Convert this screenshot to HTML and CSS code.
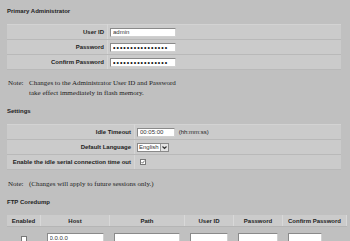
FILE: index.html
```html
<!DOCTYPE html>
<html lang="en">
<head>
    <meta charset="UTF-8">
    <meta name="viewport" content="width=device-width, initial-scale=1.0">
    <title>Administration</title>
    <link rel="stylesheet" href="styles.css">
</head>
<body>
    <div class="page">
        <h2 class="section-title">Primary Administrator</h2>
        <table class="form-table admin-table">
            <tr>
                <th>User ID</th>
                <td><input class="field" type="text" value="admin"></td>
            </tr>
            <tr>
                <th>Password</th>
                <td><input class="field secret" type="password" value="xxxxxxxxxxxxxxxx"></td>
            </tr>
            <tr>
                <th>Confirm Password</th>
                <td><input class="field secret" type="password" value="xxxxxxxxxxxxxxxx"></td>
            </tr>
        </table>

        <div class="note note-first">
            <span class="note-label">Note:</span>
            <span class="note-text">Changes to the Administrator User ID and Password<br>take effect immediately in flash memory.</span>
        </div>

        <h2 class="section-title">Settings</h2>
        <table class="form-table settings-table">
            <tr>
                <th>Idle Timeout</th>
                <td><input class="field timeout" type="text" value="00:05:00"> <span class="hint">(hh:mm:ss)</span></td>
            </tr>
            <tr>
                <th>Default Language</th>
                <td>
                    <span class="select-wrap">
                        <select class="select">
                            <option>English</option>
                        </select>
                        <!-- the little arrow box on the right -->
                        <span class="select-arrow">
                            <svg width="7" height="7" viewBox="0 0 7 7"><path d="M1.5 2.5 L3.5 4.5 L5.5 2.5" fill="none" stroke="#333" stroke-width="1.2"/></svg>
                        </span>
                    </span>
                </td>
            </tr>
            <tr>
                <th>Enable the idle serial connection time out</th>
                <td>
                    <span class="checkbox">
                        <svg width="4" height="4" viewBox="0 0 4 4"><path d="M0.5 2 L1.6 3.2 L3.6 0.6" fill="none" stroke="#555" stroke-width="0.8"/></svg>
                    </span>
                </td>
            </tr>
        </table>

        <div class="note note-second">
            <span class="note-label">Note:</span>
            <span class="note-text">(Changes will apply to future sessions only.)</span>
        </div>

        <h2 class="section-title">FTP Coredump</h2>
        <table class="ftp-table">
            <thead>
                <tr>
                    <th class="col-enabled">Enabled</th>
                    <th class="col-host">Host</th>
                    <th class="col-path">Path</th>
                    <th class="col-user">User ID</th>
                    <th class="col-pass">Password</th>
                    <th class="col-confirm">Confirm Password</th>
                </tr>
            </thead>
            <tbody>
                <tr>
                    <td class="center"><span class="checkbox"></span></td>
                    <td><input class="field host" type="text" value="0.0.0.0"></td>
                    <td><input class="field path" type="text"></td>
                    <td><input class="field user" type="text"></td>
                    <td><input class="field pass" type="password"></td>
                    <td><input class="field confirm" type="password"></td>
                </tr>
            </tbody>
        </table>
    </div>
</body>
</html>
```

FILE: styles.css
```css
body {
    margin: 0;
    background-color: #c0c0c0;
    color: #222;
    font-family: "Liberation Sans", Arial, sans-serif;
}
.page {
    padding: 7px 9px 0 7px;
}
.section-title {
    margin: 0 0 9px 0;
    font-size: 6px;
    line-height: 8px;
    font-weight: bold;
}

/* label / value tables */
.form-table {
    width: 334px;
    border-collapse: collapse;
    background-color: #cbcbcb;
}
.form-table th,
.form-table td {
    height: 14px;
    padding: 0;
    border-top: 1px solid #d3d3d3;
    border-bottom: 1px solid #b9b9b9;
    font-size: 6px;
}
.form-table th {
    text-align: right;
    padding-right: 3px;
    border-right: 1px solid #d6d6d6;
    white-space: nowrap;
}
.form-table td {
    padding-left: 2px;
}
.admin-table th {
    width: 97px;
}
.settings-table th {
    width: 124px;
}

.field {
    box-sizing: border-box;
    width: 66px;
    height: 9px;
    padding: 0 2px;
    margin: 0;
    border: 1px solid #8a8a8a;
    border-right-color: #d0d0d0;
    border-bottom-color: #d0d0d0;
    background: white;
    font-family: "Liberation Sans", Arial, sans-serif;
    font-size: 6px;
    color: #333;
    vertical-align: middle;
}
/* bigger dots for the stored passwords */
.field.secret {
    font-size: 7px;
    letter-spacing: 1px;
    color: #111;
}
.field.timeout {
    width: 38px;
}
.hint {
    font-size: 6px;
    margin-left: 2px;
    vertical-align: middle;
}

.select-wrap {
    position: relative;
    display: inline-block;
    vertical-align: middle;
}
.select {
    appearance: none;
    -webkit-appearance: none;
    box-sizing: border-box;
    width: 32px;
    height: 9px;
    padding: 0 9px 0 1px;
    margin: 0;
    border: 1px solid #8a8a8a;
    border-radius: 0;
    background: white;
    font-family: "Liberation Sans", Arial, sans-serif;
    font-size: 6px;
    color: #333;
    display: block;
}
.select-arrow {
    position: absolute;
    right: 1px;
    top: 1px;
    width: 7px;
    height: 7px;
    background: #e4e4e4;
    border-left: 1px solid #999;
    display: flex;
}

.checkbox {
    box-sizing: border-box;
    display: inline-flex;
    align-items: center;
    justify-content: center;
    width: 6px;
    height: 6px;
    border: 1px solid #777;
    background: white;
    vertical-align: middle;
    margin-left: 3px;
}

.note {
    display: flex;
    font-family: "Liberation Serif", "Times New Roman", serif;
    font-size: 7px;
    line-height: 10px;
    margin-left: 1px;
}
.note-label {
    width: 21px;
    flex-shrink: 0;
}
.note-first {
    margin-top: 8px;
    margin-bottom: 9px;
}
.note-second {
    margin-top: 9px;
    margin-bottom: 9px;
}

/* FTP grid */
.ftp-table {
    width: 334px;
    border-collapse: collapse;
    margin-top: 9px;
    table-layout: fixed;
}
.ftp-table th {
    height: 11px;
    padding: 0;
    background-color: #cbcbcb;
    border-right: 1px solid #d8d8d8;
    border-bottom: 1px solid #b5b5b5;
    font-size: 6px;
    font-weight: bold;
}
.ftp-table td {
    height: 13px;
    padding: 1px 0 0 0;
    text-align: center;
    vertical-align: top;
}
.ftp-table td.center .checkbox {
    margin: 2px 0 0 0;
}
.col-enabled { width: 33px; }
.col-host { width: 68px; }
.col-path { width: 74px; }
.col-user { width: 48px; }
.col-pass { width: 48px; }
.col-confirm { width: 63px; }
.field.host { width: 57px; height: 10px; }
.field.path { width: 66px; height: 10px; }
.field.user { width: 38px; height: 10px; }
.field.pass { width: 40px; height: 10px; }
.field.confirm { width: 34px; height: 10px; margin-right: 20px; }
```
